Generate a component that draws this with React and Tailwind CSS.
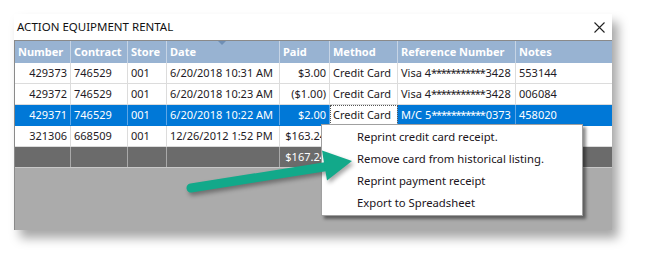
import React from "react";

const cols = [
  { w: "w-[56px]", align: "text-right" },
  { w: "w-[57px]", align: "text-left" },
  { w: "w-[39px]", align: "text-left" },
  { w: "w-[113px]", align: "text-left" },
  { w: "w-[50px]", align: "text-right" },
  { w: "w-[68px]", align: "text-left" },
  { w: "w-[118px]", align: "text-left" },
  { w: "w-[97px]", align: "text-left" },
];

const headers = ["Number", "Contract", "Store", "Date", "Paid", "Method", "Reference Number", "Notes"];

const rows = [
  ["429373", "746529", "001", "6/20/2018 10:31 AM", "$3.00", "Credit Card", ["Visa 4", "3428"], "553144"],
  ["429372", "746529", "001", "6/20/2018 10:23 AM", "($1.00)", "Credit Card", ["Visa 4", "3428"], "006084"],
  ["429371", "746529", "001", "6/20/2018 10:22 AM", "$2.00", "Credit Card", ["M/C 5", "0373"], "458020"],
  ["321306", "668509", "001", "12/26/2012 1:52 PM", "$163.24", "", "", ""],
];

function Cell({ c }) {
  if (Array.isArray(c)) {
    return (
      <>
        {c[0]}
        <span className="tracking-[-1.2px]">***********</span>
        <span className="ml-[1px]">{c[1]}</span>
      </>
    );
  }
  return c;
}

function Row({ cells, selected }) {
  return (
    <div className={`flex h-[21px] border-b ${selected ? "bg-[#0078d7] border-[#0078d7]" : "bg-white border-[#dcdcdc]"}`}>
      {cells.map((c, i) => {
        const focus = selected && i === 5;
        return (
          <div
            key={i}
            className={`${cols[i].w} ${cols[i].align} shrink-0 overflow-hidden whitespace-nowrap px-[3px] leading-[20px] ${
              i < 7 ? (selected ? "border-r border-[#5ea6e6]" : "border-r border-[#dcdcdc]") : ""
            } ${focus ? "bg-white text-[#1b1b1b] outline outline-1 outline-dotted outline-[#555] -outline-offset-1" : selected ? "text-white" : "text-[#1e1a24]"}`}
          >
            <Cell c={c} />
          </div>
        );
      })}
    </div>
  );
}

export default function App() {
  return (
    <div className="relative w-[647px] h-[265px] bg-white overflow-hidden font-['Noto_Sans',sans-serif] text-[11px]">
      <div className="pt-[14px] pl-[14px]">
        <div className="w-[598px] h-[216px] flex flex-col bg-white shadow-[6px_8px_10px_rgba(0,0,0,0.35)]">
          <div className="h-[26px] flex items-center justify-between pl-[3px] pr-[7px] text-[#111] text-[11.5px]">
            <span>ACTION EQUIPMENT RENTAL</span>
            <svg width="11" height="11" viewBox="0 0 11 11">
              <path d="M0.5 0.5 L10.5 10.5 M10.5 0.5 L0.5 10.5" stroke="#222" strokeWidth="1.1" />
            </svg>
          </div>
          <div className="flex-1 flex flex-col bg-[#ababab] border-t border-[#8a8a8a] border-l border-l-[#8a8a8a]">
            <div className="relative flex h-[22px] bg-[#98b3d2] text-white font-bold">
              {headers.map((h, i) => (
                <div
                  key={i}
                  className={`${cols[i].w} shrink-0 overflow-hidden whitespace-nowrap px-[3px] leading-[21px] ${i < 7 ? "border-r border-[#c6d4e5]" : ""}`}
                >
                  {h}
                </div>
              ))}
              <div className="absolute left-[203px] top-0 w-0 h-0 border-l-[4px] border-r-[4px] border-t-[4px] border-l-transparent border-r-transparent border-t-[#6f8fb5]" />
            </div>
            {rows.map((r, i) => (
              <Row key={i} cells={r} selected={i === 2} />
            ))}
            <div className="flex h-[21px] bg-[#6b6b6b] border-b border-[#c8c8c8] text-white">
              {cols.map((c, i) => (
                <div
                  key={i}
                  className={`${c.w} ${c.align} shrink-0 overflow-hidden whitespace-nowrap px-[3px] leading-[20px] ${i < 7 ? "border-r border-[#a9a9a9]" : ""}`}
                >
                  {i === 4 ? "$167.24" : ""}
                </div>
              ))}
            </div>
          </div>
        </div>
      </div>

      {/* context menu */}
      <div className="absolute left-[321px] top-[124px] w-[262px] h-[92px] bg-white border border-[#a0a0a0] shadow-[3px_3px_3px_rgba(0,0,0,0.45)] flex flex-col pt-[1px] text-[11.3px] text-[#1b1420]">
        {["Reprint credit card receipt.", "Remove card from historical listing.", "Reprint payment receipt", "Export to Spreadsheet"].map((t) => (
          <div key={t} className="h-[22px] leading-[22px] pl-[35px] whitespace-nowrap">
            {t}
          </div>
        ))}
      </div>

      {/* arrow */}
      <svg className="absolute left-0 top-0" width="647" height="265" style={{ filter: "drop-shadow(2px 3px 2px rgba(0,0,0,0.35))" }}>
        <line x1="191" y1="188" x2="330" y2="166" stroke="#12a98a" strokeWidth="9" strokeLinecap="round" />
        <polygon points="352,161 322,150.5 327,180.5" fill="#12a98a" />
      </svg>
    </div>
  );
}
